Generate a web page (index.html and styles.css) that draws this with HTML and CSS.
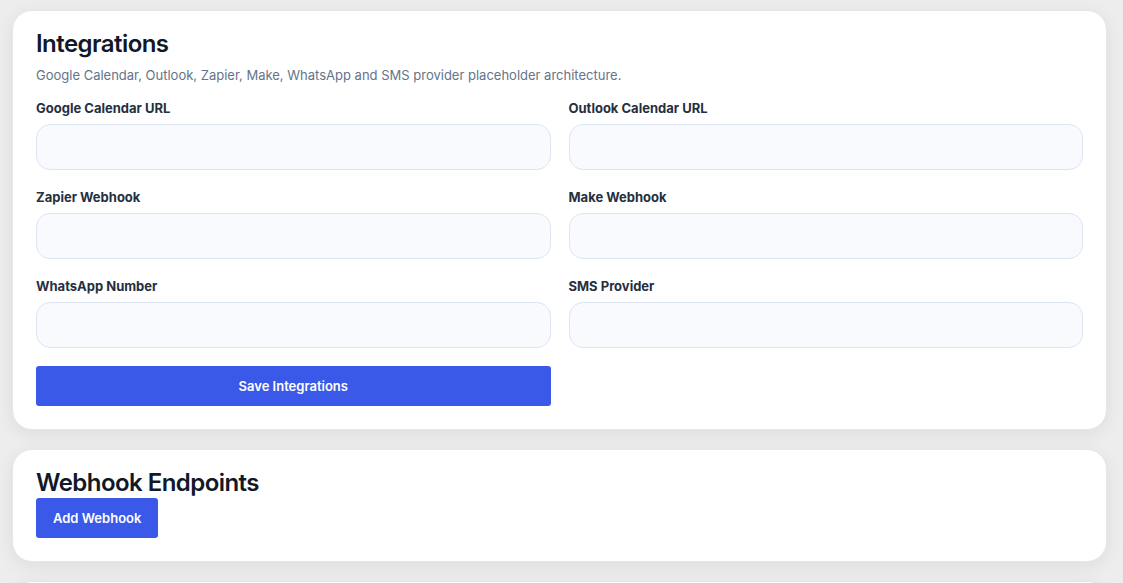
FILE: index.html
```html
<!DOCTYPE html>
<html>
<head>
<meta charset="utf-8">
<link rel="stylesheet" href="styles.css">
</head>
<body>
<main class="page">
  <section class="card">
    <h2 class="card-title">Integrations</h2>
    <p class="card-desc">Google Calendar, Outlook, Zapier, Make, WhatsApp and SMS provider placeholder architecture.</p>
    <form class="form-grid">
      <div class="field">
        <label class="field-label">Google Calendar URL</label>
        <input class="field-input" type="text">
      </div>
      <div class="field">
        <label class="field-label">Outlook Calendar URL</label>
        <input class="field-input" type="text">
      </div>
      <div class="field">
        <label class="field-label">Zapier Webhook</label>
        <input class="field-input" type="text">
      </div>
      <div class="field">
        <label class="field-label">Make Webhook</label>
        <input class="field-input" type="text">
      </div>
      <div class="field">
        <label class="field-label">WhatsApp Number</label>
        <input class="field-input" type="text">
      </div>
      <div class="field">
        <label class="field-label">SMS Provider</label>
        <input class="field-input" type="text">
      </div>
      <button class="btn btn-block" type="button">Save Integrations</button>
    </form>
  </section>
  <section class="card card-stack">
    <h2 class="card-title card-title-tight">Webhook Endpoints</h2>
    <button class="btn btn-inline" type="button">Add Webhook</button>
  </section>
  <section class="card card-empty"></section>
</main>
</body>
</html>
```
FILE: styles.css
```css
* { box-sizing: border-box; }
html, body { margin: 0; padding: 0; }
body {
  background: #ededee;
  font-family: Inter, "Noto Sans", sans-serif;
  color: #111827;
  overflow: hidden;
  height: 583px;
}
.page {
  display: flex;
  flex-direction: column;
  gap: 19px;
  padding: 10px 16px 0 12px;
}
.card {
  background: #ffffff;
  border: 1px solid #e4e6ea;
  border-radius: 20px;
  padding: 18px 23px 23px;
  box-shadow: 0 4px 18px rgba(15, 23, 42, 0.07);
}
.card-stack { display: flex; flex-direction: column; }
.card-empty { height: 80px; }
.card-title {
  margin: 0 0 9px;
  font-size: 24px;
  font-weight: 600;
  line-height: 29px;
  color: #111827;
  letter-spacing: -0.55px;
}
.card-title-tight { margin-bottom: 1px; }
.card-desc {
  margin: 0 0 17px;
  font-size: 13px;
  line-height: 16px;
  color: #64748b;
}
.form-grid {
  display: grid;
  grid-template-columns: 1fr 1fr;
  column-gap: 18px;
  row-gap: 19px;
}
.field { display: flex; flex-direction: column; }
.field-label {
  font-size: 13px;
  font-weight: 700;
  line-height: 16px;
  color: #252f3f;
  margin-bottom: 8px;
}
.field-input {
  height: 46px;
  border: 1px solid #dde5f2;
  border-radius: 14px;
  background: #f8fafd;
  font-family: inherit;
  font-size: 14px;
  padding: 0 14px;
  outline: none;
}
.btn {
  height: 40px;
  border: none;
  border-radius: 3px;
  background: #3b59e8;
  color: #ffffff;
  font-family: inherit;
  font-size: 13px;
  font-weight: 600;
  cursor: pointer;
}
.btn-block { width: 100%; margin-top: -1px; }
.btn-inline { align-self: flex-start; padding: 0 17px; }
```
